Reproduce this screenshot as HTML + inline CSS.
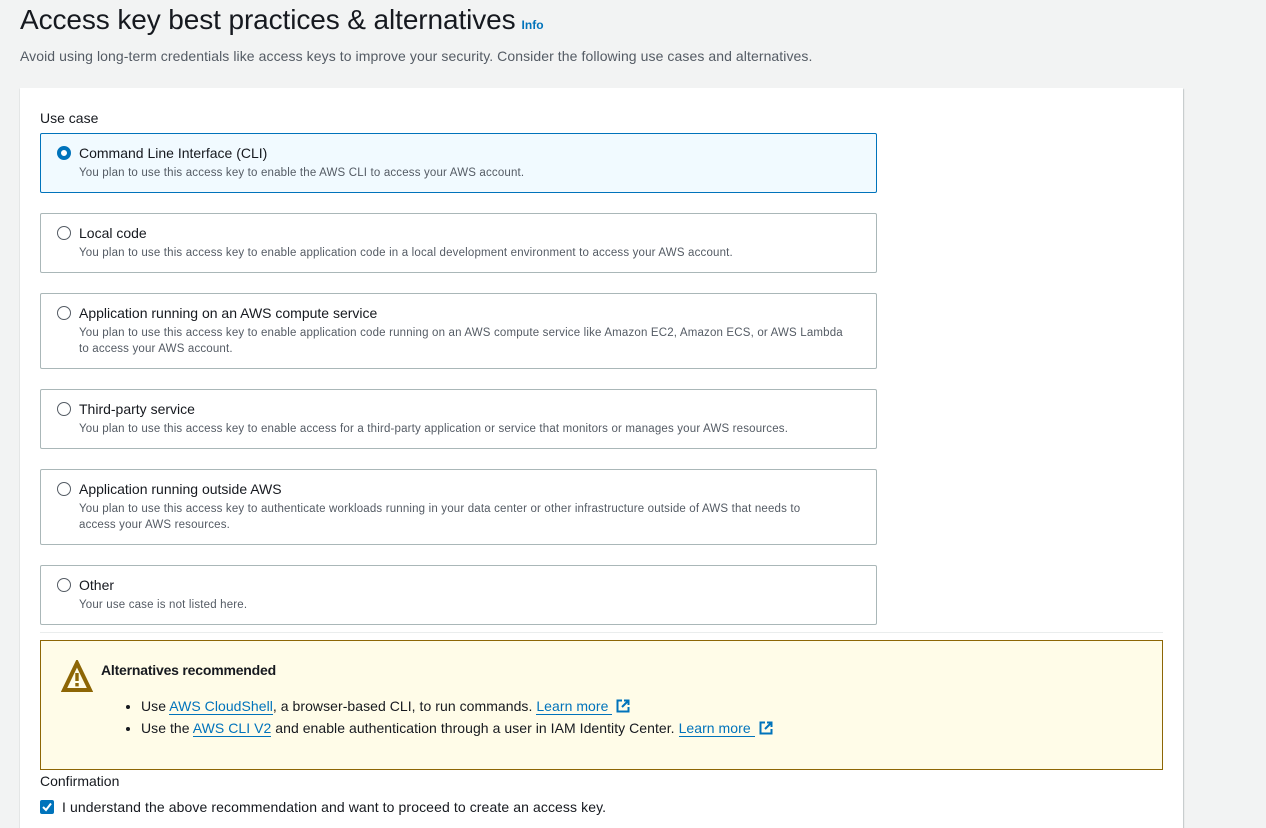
<!DOCTYPE html>
<html><head><style>
*{box-sizing:border-box;margin:0;padding:0}
body{width:1266px;height:820px;overflow:hidden;background:#f2f3f3;font-family:"Liberation Sans",sans-serif;color:#16191f;position:relative}
.abs{position:absolute}
h1{position:absolute;left:20px;top:4px;font-size:28px;font-weight:400;letter-spacing:-0.1px;white-space:nowrap}
h1 span{font-size:12px;font-weight:700;color:#0073bb;letter-spacing:0;margin-left:6px}
.sub{left:20px;top:48px;font-size:14px;color:#545b64;letter-spacing:0.08px;white-space:nowrap}
.card{left:20px;top:88px;width:1163px;height:740px;background:#fff;box-shadow:0 1px 1px rgba(0,28,36,.3),1px 1px 1px rgba(0,28,36,.15)}
.lbl{font-size:14px;letter-spacing:0;white-space:nowrap}
.opt{position:absolute;left:40px;width:837px;border:1px solid #aab7b8;border-radius:2px;background:#fff}
.opt.sel{border-color:#0073bb;background:#f1faff}
.opt .r{position:absolute;left:16px;top:12px;width:14px;height:14px;border:1.5px solid #545b64;border-radius:50%;background:#fff}
.opt.sel .r{border:4px solid #0073bb}
.opt .t{position:absolute;left:38px;top:11px;font-size:14px;letter-spacing:0;white-space:nowrap}
.opt .d{position:absolute;left:38px;top:31px;font-size:11.5px;color:#545b64;letter-spacing:0.17px;line-height:16px;width:770px}
.alert{left:40px;top:640px;width:1123px;height:130px;background:#fffce8;border:1px solid #8d6605}
.alert b{position:absolute;left:60px;top:21px;font-size:14px;letter-spacing:-0.2px}
.alert ul{position:absolute;left:100px;top:54px;font-size:14px;letter-spacing:0.05px;line-height:22px;white-space:nowrap}
a{color:#0073bb;text-decoration:none;border-bottom:1px solid #0073bb}
.ext{display:inline-block;vertical-align:-2px;margin-left:4px}
</style></head><body>
<h1>Access key best practices &amp; alternatives<span>Info</span></h1>
<div class="abs sub">Avoid using long-term credentials like access keys to improve your security. Consider the following use cases and alternatives.</div>
<div class="abs card"></div>
<div class="abs lbl" style="left:40px;top:110px">Use case</div>

<div class="opt sel" style="top:133px;height:60px"><div class="r"></div><div class="t">Command Line Interface (CLI)</div><div class="d">You plan to use this access key to enable the AWS CLI to access your AWS account.</div></div>
<div class="opt" style="top:213px;height:60px"><div class="r"></div><div class="t">Local code</div><div class="d">You plan to use this access key to enable application code in a local development environment to access your AWS account.</div></div>
<div class="opt" style="top:293px;height:76px"><div class="r"></div><div class="t">Application running on an AWS compute service</div><div class="d">You plan to use this access key to enable application code running on an AWS compute service like Amazon EC2, Amazon ECS, or AWS Lambda<br>to access your AWS account.</div></div>
<div class="opt" style="top:389px;height:60px"><div class="r"></div><div class="t">Third-party service</div><div class="d">You plan to use this access key to enable access for a third-party application or service that monitors or manages your AWS resources.</div></div>
<div class="opt" style="top:469px;height:76px"><div class="r"></div><div class="t">Application running outside AWS</div><div class="d">You plan to use this access key to authenticate workloads running in your data center or other infrastructure outside of AWS that needs to<br>access your AWS resources.</div></div>
<div class="opt" style="top:565px;height:60px"><div class="r"></div><div class="t">Other</div><div class="d">Your use case is not listed here.</div></div>
<div class="abs" style="left:40px;top:632px;width:1123px;height:1px;background:#eaeded"></div>

<div class="abs alert">
<svg class="abs" style="left:20px;top:19px" width="32" height="33" viewBox="0 0 32 33"><path d="M16 3L3 30H29Z" fill="none" stroke="#8d6605" stroke-width="4" stroke-linejoin="miter"/><rect x="14.3" y="13" width="3.4" height="8" fill="#8d6605"/><rect x="14.3" y="23" width="3.4" height="3.4" fill="#8d6605"/></svg>
<b>Alternatives recommended</b>
<ul>
<li>Use <a>AWS CloudShell</a>, a browser-based CLI, to run commands. <a>Learn more </a><svg class="ext" width="14" height="14" viewBox="0 0 14 14"><path d="M6 1.5H1.5V12.5H12.5V8M8 1.5H12.5V6M12.5 1.5L6 8" fill="none" stroke="#0073bb" stroke-width="2"/></svg></li>
<li>Use the <a>AWS CLI V2</a> and enable authentication through a user in IAM Identity Center. <a>Learn more </a><svg class="ext" width="14" height="14" viewBox="0 0 14 14"><path d="M6 1.5H1.5V12.5H12.5V8M8 1.5H12.5V6M12.5 1.5L6 8" fill="none" stroke="#0073bb" stroke-width="2"/></svg></li>
</ul>
</div>
<div class="abs lbl" style="left:40px;top:773px">Confirmation</div>
<div class="abs" style="left:40px;top:800px;width:14px;height:14px;background:#0073bb;border-radius:2px"><svg width="14" height="14" viewBox="0 0 14 14"><path d="M3 7L6 10L11 3.5" fill="none" stroke="#fff" stroke-width="2"/></svg></div>
<div class="abs lbl" style="left:62px;top:799px;letter-spacing:0.1px">I understand the above recommendation and want to proceed to create an access key.</div>
</body></html>
